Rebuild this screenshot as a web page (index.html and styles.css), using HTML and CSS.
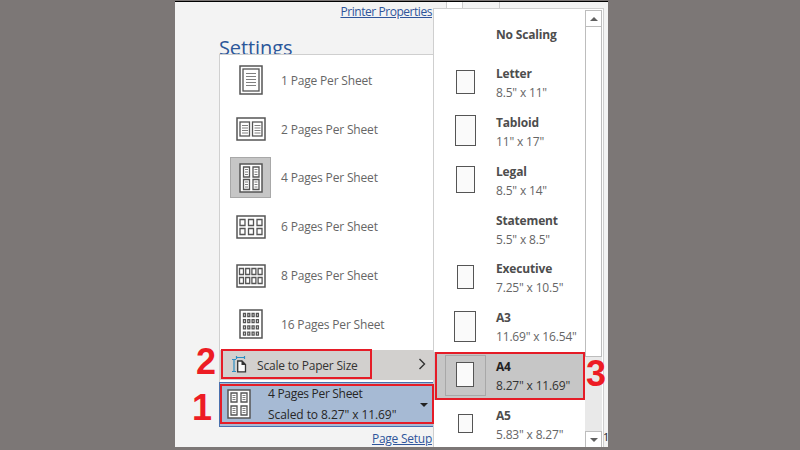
FILE: index.html
```
<!DOCTYPE html>
<html lang="en">
  <head>
    <meta charset="UTF-8" />
    <meta name="viewport" content="width=device-width, initial-scale=1.0" />
    <title>Print Settings</title>
    <link rel="stylesheet" href="styles.css">
  </head>
  <body>
    <div class="window">
      <!-- Print settings pane -->
      <div class="pane">
        <a class="link printer-link">Printer Properties</a>
        <h1 class="heading">Settings</h1>

        <div class="menu">
          <div class="menu-item">
            <span class="icon"><svg width="24" height="30" viewBox="0 0 24 30"><rect class="sheet" x="1" y="1" width="22" height="28" /><rect class="page" x="4" y="4" width="16" height="22" /><path class="lines" d="M7 8.5h10M7 11.5h10M7 14.5h10M7 17.5h10M7 20.5h10" /></svg></span>
            <span class="label">1 Page Per Sheet</span>
          </div>
          <div class="menu-item">
            <span class="icon"><svg width="30" height="24" viewBox="0 0 30 24"><rect class="sheet" x="1" y="1" width="28" height="22" /><rect class="page" x="4" y="5" width="9.5" height="14" /><rect class="page" x="16.5" y="5" width="9.5" height="14" /><path class="lines" d="M6 8.5h6M6 11h6M6 13.5h6M6 16h6M18.5 8.5h6M18.5 11h6M18.5 13.5h6M18.5 16h6" /></svg></span>
            <span class="label">2 Pages Per Sheet</span>
          </div>
          <div class="menu-item">
            <span class="icon selected"><svg width="24" height="30" viewBox="0 0 24 30"><rect class="sheet" x="1" y="1" width="22" height="28" /><path class="page" d="M4.500 4h6v10h-6zM14 4h6v10h-6zM4.500 16.500h6v10h-6zM14 16.500h6v10h-6z" /><path class="lines" d="M6 6.500h3M6 9h3M6 11.500h3M15.500 6.500h3M15.500 9h3M15.500 11.500h3M6 19h3M6 21.500h3M6 24h3M15.500 19h3M15.500 21.500h3M15.500 24h3" /></svg></span>
            <span class="label">4 Pages Per Sheet</span>
          </div>
          <div class="menu-item">
            <span class="icon"><svg width="30" height="24" viewBox="0 0 30 24"><rect class="sheet" x="1" y="1" width="28" height="22" /><path class="page" d="M4 4.500h5v6H4zM12.500 4.500h5v6h-5zM21 4.500h5v6h-5zM4 13.500h5v6H4zM12.500 13.500h5v6h-5zM21 13.500h5v6h-5z" /></svg></span>
            <span class="label">6 Pages Per Sheet</span>
          </div>
          <div class="menu-item">
            <span class="icon"><svg width="30" height="24" viewBox="0 0 30 24"><rect class="sheet" x="1" y="1" width="28" height="22" /><path class="page" d="M3.500 4.500h4v6h-4zM9.700 4.500h4v6h-4zM15.900 4.500h4v6h-4zM22.100 4.500h4v6h-4zM3.500 13.500h4v6h-4zM9.700 13.500h4v6h-4zM15.900 13.500h4v6h-4zM22.100 13.500h4v6h-4z" /></svg></span>
            <span class="label">8 Pages Per Sheet</span>
          </div>
          <div class="menu-item">
            <span class="icon"><svg width="24" height="30" viewBox="0 0 24 30"><defs><g id="row"><path class="page" d="M4.500 0h2v3h-2zM8.800 0h2v3h-2zM13.100 0h2v3h-2zM17.400 0h2v3h-2z" /></g></defs><rect class="sheet" x="1" y="1" width="22" height="28" /><use href="#row" y="4.500" /><use href="#row" y="10.700" /><use href="#row" y="16.900" /><use href="#row" y="23.100" /></svg></span>
            <span class="label">16 Pages Per Sheet</span>
          </div>
          <div class="scale-item">
            <svg width="15" height="17" viewBox="0 0 15 17"><path class="ruler" d="M0 3.500h4M2 3.500v12M0 15.500h4M4 1.500h9M4.500 0v3M12.500 0v3" /><path class="doc" d="M5.700 5h4.300l3.500 3.500v7.300H5.700z" /><path class="doc-fold" d="M9.500 4.500l4.500 4.500h-4.500z" /></svg>
            <span class="scale-label">Scale to Paper Size</span>
            <svg class="chevron" width="8" height="12" viewBox="0 0 8 12"><path d="M1.500 1l5 5-5 5" /></svg>
          </div>
        </div>

        <div class="combo">
          <svg width="24" height="30" viewBox="0 0 24 30"><rect class="sheet" x="1" y="1" width="22" height="28" /><path class="page" d="M4 4h6v9H4zM14 4h6v9h-6zM4 17h6v9H4zM14 17h6v9h-6z" /><path class="lines" d="M5.500 6.500h3M5.500 8.500h3M5.500 10.500h3M15.500 6.500h3M15.500 8.500h3M15.500 10.500h3M5.500 19.500h3M5.500 21.500h3M5.500 23.500h3M15.500 19.500h3M15.500 21.500h3M15.500 23.500h3" /></svg>
          <div class="combo-text">
            <div class="combo-title">4 Pages Per Sheet</div>
            <div class="combo-size">Scaled to 8.27" x 11.69"</div>
          </div>
          <span class="arrow-down"></span>
        </div>
        <a class="link setup-link">Page Setup</a>
      </div>

      <div class="preview">
        <div class="tab"></div>
        <div class="divider"></div>
        <span class="page-number">1</span>
      </div>

      <!-- Paper size submenu -->
      <div class="submenu">
        <div class="papers">
          <div class="paper">
            <span class="thumb"></span>
            <div><div class="name">No Scaling</div></div>
          </div>
          <div class="paper">
            <span class="thumb"><i class="sheet-shape letter"></i></span>
            <div><div class="name">Letter</div><div class="size">8.5" x 11"</div></div>
          </div>
          <div class="paper">
            <span class="thumb"><i class="sheet-shape tabloid"></i></span>
            <div><div class="name">Tabloid</div><div class="size">11" x 17"</div></div>
          </div>
          <div class="paper">
            <span class="thumb"><i class="sheet-shape legal"></i></span>
            <div><div class="name">Legal</div><div class="size">8.5" x 14"</div></div>
          </div>
          <div class="paper">
            <span class="thumb"></span>
            <div><div class="name">Statement</div><div class="size">5.5" x 8.5"</div></div>
          </div>
          <div class="paper">
            <span class="thumb"><i class="sheet-shape executive"></i></span>
            <div><div class="name">Executive</div><div class="size">7.25" x 10.5"</div></div>
          </div>
          <div class="paper">
            <span class="thumb"><i class="sheet-shape a3"></i></span>
            <div><div class="name">A3</div><div class="size">11.69" x 16.54"</div></div>
          </div>
          <div class="paper active">
            <span class="thumb"><i class="sheet-shape a4"></i></span>
            <div><div class="name">A4</div><div class="size">8.27" x 11.69"</div></div>
          </div>
          <div class="paper">
            <span class="thumb"><i class="sheet-shape a5"></i></span>
            <div><div class="name">A5</div><div class="size">5.83" x 8.27"</div></div>
          </div>
        </div>
        <div class="scrollbar">
          <div class="scroll-btn"><span class="arrow-up"></span></div>
          <div class="scroll-thumb"></div>
          <div class="scroll-track"></div>
          <div class="scroll-btn"><span class="arrow-down"></span></div>
        </div>
      </div>
    </div>

    <!-- Step markers -->
    <div class="mark mark-1"></div>
    <div class="mark mark-2"></div>
    <div class="mark mark-3"></div>
    <div class="step step-1">1</div>
    <div class="step step-2">2</div>
    <div class="step step-3">3</div>
  </body>
</html>
```
FILE: styles.css
```
* {
  box-sizing: border-box;
}
body {
  margin: 0;
  height: 450px;
  background-color: #7c7776;
  font-family: "Open Sans", "Noto Sans", sans-serif;
  font-size: 12px;
  letter-spacing: -0.17px;
  color: #666;
  position: relative;
  overflow: hidden;
  white-space: nowrap;
}
.window {
  position: relative;
  display: flex;
  width: 433px;
  height: 446px;
  margin: 1px 0 0 175px;
  border-top: 1px solid #000;
  background-color: #f3f3f3;
  overflow: hidden;
}
.pane {
  display: flex;
  flex-direction: column;
  width: 259px;
  padding: 1px 0 0 44px;
}
.pane > * {
  flex-shrink: 0;
}
.link {
  align-self: flex-end;
  margin-right: 2px;
  color: #2f559b;
  text-decoration: underline;
  line-height: 18px;
}
.printer-link {
  height: 33px;
  letter-spacing: -0.45px;
}
.heading {
  height: 18px;
  margin: 0;
  font-size: 20px;
  font-weight: 400;
  letter-spacing: -0.1px;
  line-height: 23px;
  color: #2b579a;
}
.menu {
  position: relative;
  height: 328px;
  padding-top: 1px;
  background-color: #fff;
  border-top: 1px solid #cfcfcf;
  border-left: 1px solid #d0d0d0;
}
.menu-item {
  display: flex;
  align-items: center;
  height: 48.8px;
  padding-left: 10px;
}
.icon {
  display: flex;
  align-items: center;
  justify-content: center;
  width: 41px;
  height: 41px;
  margin-right: 10px;
}
.selected {
  background-color: #c6c6c6;
  border: 1px solid #a8a8a8;
}
.sheet {
  fill: #fff;
  stroke: #555;
  stroke-width: 1.5;
}
.page {
  fill: #fff;
  stroke: #555;
  stroke-width: 1.3;
}
.lines {
  fill: none;
  stroke: #808080;
  stroke-width: 1;
}
.scale-item {
  display: flex;
  align-items: center;
  height: 30px;
  margin-top: 1px;
  padding: 0 8px 0 12px;
  background-color: #d2d0ce;
  color: #333;
}
.scale-label {
  flex: 1;
  margin: 2px 0 0 10px;
  letter-spacing: -0.2px;
}
.ruler {
  fill: none;
  stroke: #2c8fc4;
  stroke-width: 1.2;
}
.doc {
  fill: #fafafa;
  stroke: #333;
  stroke-width: 1.3;
}
.doc-fold {
  fill: #333;
}
.chevron {
  margin-top: -1px;
  fill: none;
  stroke: #333;
  stroke-width: 1.4;
}
.combo {
  display: flex;
  align-items: center;
  height: 45px;
  padding: 0 5px 0 7px;
  background-color: #a6bad4;
  border: 1px solid #4a70ad;
  color: #262626;
}
.combo svg {
  margin-top: -1px;
}
.combo-text {
  flex: 1;
  margin: -2px 0 0 17px;
  line-height: 21px;
}
.combo-title {
  letter-spacing: -0.3px;
}
.combo-size {
  letter-spacing: -0.08px;
}
.arrow-down {
  border: 4px solid transparent;
  border-top-color: #222;
  border-bottom: 0;
}
.arrow-up {
  border: 4px solid transparent;
  border-bottom-color: #606060;
  border-top: 0;
}
.setup-link {
  margin-top: 3px;
  letter-spacing: -0.25px;
}
.preview {
  display: flex;
  flex: 1;
  padding-left: 12px;
}
.tab {
  width: 17px;
  height: 7px;
  background-color: #fff;
  border: 1px solid #ccc;
  border-width: 0 1px;
}
.divider {
  width: 37px;
  height: 7px;
  border-right: 1px solid #ccc;
}
.page-number {
  align-self: flex-end;
  margin: 0 -1px 3px auto;
  font-size: 11px;
  color: #222;
}
.submenu {
  position: absolute;
  left: 258px;
  top: 6px;
  display: flex;
  width: 171px;
  height: 440px;
  padding: 1px 1px 0 0;
  background-color: #fff;
  border: 1px solid #cfcfcf;
  border-bottom: 0;
}
.papers {
  flex: 1;
}
.paper {
  display: flex;
  align-items: center;
  height: 48.8px;
  padding-left: 11px;
  line-height: 19px;
}
.thumb {
  display: flex;
  align-items: center;
  justify-content: center;
  width: 41px;
  height: 41px;
  margin-right: 10px;
}
.name {
  font-weight: 700;
  color: #4d4d4d;
}
.active {
  background-color: #c6c6c6;
  color: #333;
}
.active .name {
  color: #222;
}
.active .thumb {
  border: 1px solid #a8a8a8;
}
.sheet-shape {
  margin: -2px 1px 0 0;
  border: 1px solid #555;
  background-color: #fafafa;
}
.letter {
  width: 19px;
  height: 24px;
}
.tabloid {
  width: 21px;
  height: 31px;
}
.legal {
  width: 19px;
  height: 27px;
}
.executive {
  width: 17px;
  height: 24px;
}
.a3 {
  width: 22px;
  height: 31px;
}
.a4 {
  width: 18px;
  height: 25px;
}
.a5 {
  width: 15px;
  height: 19px;
}
.scrollbar {
  display: flex;
  flex-direction: column;
  width: 17px;
  background-color: #e9e9e9;
}
.scroll-btn {
  display: flex;
  align-items: center;
  justify-content: center;
  height: 17px;
  background-color: #fff;
  border: 1px solid #bdbdbd;
}
.scroll-btn .arrow-down {
  border-top-color: #606060;
}
.scroll-thumb {
  height: 330px;
  background-color: #fff;
  border: 1px solid #bdbdbd;
  border-top: 0;
}
.scroll-track {
  flex: 1;
}
.mark {
  position: absolute;
  border: 2px solid #e51c27;
}
.mark-1 {
  left: 220px;
  top: 384px;
  width: 214px;
  height: 40px;
}
.mark-2 {
  left: 221px;
  top: 349px;
  width: 151px;
  height: 30px;
}
.mark-3 {
  left: 435px;
  top: 352px;
  width: 150px;
  height: 48px;
}
.step {
  position: absolute;
  font-family: "Liberation Sans", Arial, sans-serif;
  font-size: 36px;
  font-weight: 700;
  letter-spacing: 0;
  line-height: 36px;
  color: #ed1c24;
}
.step-1 {
  left: 192px;
  top: 390px;
}
.step-2 {
  left: 196px;
  top: 344px;
}
.step-3 {
  left: 586px;
  top: 356px;
}
```
